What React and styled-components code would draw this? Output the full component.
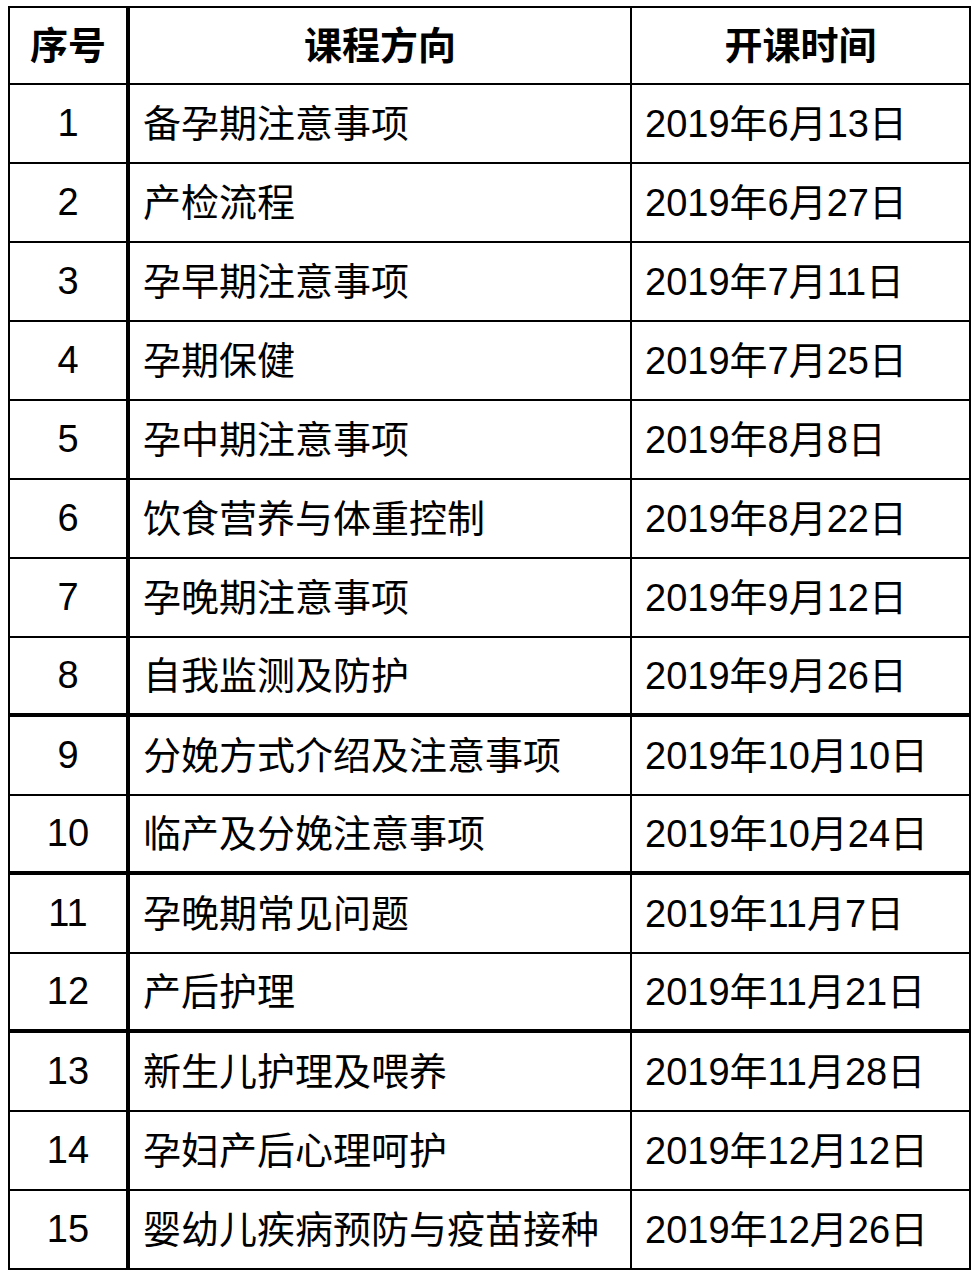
import React from "react";
import styled, { createGlobalStyle } from "styled-components";

const Global = createGlobalStyle`
  html, body { margin: 0; padding: 0; background: #fff; }
  body { font-family: "Liberation Sans", "Noto Sans CJK SC", sans-serif; color: #000; }
`;

const Page = styled.div`
  padding: 6px 9px 12px 8px;
`;

const Table = styled.div`
  width: 963px;
  box-sizing: border-box;
  border: 2px solid #000;
  display: flex;
  flex-direction: column;
`;

const Row = styled.div`
  display: grid;
  grid-template-columns: 120px 502px 337px;
  height: ${(p) => (p.$last || p.$head ? 77 : 79)}px;
  box-sizing: border-box;
  border-bottom: ${(p) => (p.$last ? 0 : p.$thick ? 4 : 2)}px solid #000;
`;

const Cell = styled.div`
  display: flex;
  align-items: center;
  justify-content: ${(p) => (p.$center ? "center" : "flex-start")};
  padding-left: ${(p) => (p.$center ? 0 : 13)}px;
  padding-bottom: ${(p) => (p.$num ? 0 : 6)}px;
  box-sizing: border-box;
  border-right: ${(p) => p.$divider || 0}px solid #000;
  font-size: 38px;
  font-weight: ${(p) => (p.$bold ? 700 : 400)};
  white-space: nowrap;
  overflow: hidden;
`;

const rows = [
  ["1", "备孕期注意事项", "2019年6月13日"],
  ["2", "产检流程", "2019年6月27日"],
  ["3", "孕早期注意事项", "2019年7月11日"],
  ["4", "孕期保健", "2019年7月25日"],
  ["5", "孕中期注意事项", "2019年8月8日"],
  ["6", "饮食营养与体重控制", "2019年8月22日"],
  ["7", "孕晚期注意事项", "2019年9月12日"],
  ["8", "自我监测及防护", "2019年9月26日", true],
  ["9", "分娩方式介绍及注意事项", "2019年10月10日"],
  ["10", "临产及分娩注意事项", "2019年10月24日", true],
  ["11", "孕晚期常见问题", "2019年11月7日"],
  ["12", "产后护理", "2019年11月21日", true],
  ["13", "新生儿护理及喂养", "2019年11月28日"],
  ["14", "孕妇产后心理呵护", "2019年12月12日"],
  ["15", "婴幼儿疾病预防与疫苗接种", "2019年12月26日"],
];

export default function App() {
  return (
    <Page>
      <Global />
      <Table>
        <Row $head>
          <Cell $center $bold $divider={4}>序号</Cell>
          <Cell $center $bold $divider={2}>课程方向</Cell>
          <Cell $center $bold>开课时间</Cell>
        </Row>
        {rows.map(([n, name, date, thick], i) => (
          <Row key={n} $thick={thick} $last={i === rows.length - 1}>
            <Cell $center $num $divider={4}>{n}</Cell>
            <Cell $divider={2}>{name}</Cell>
            <Cell>{date}</Cell>
          </Row>
        ))}
      </Table>
    </Page>
  );
}
